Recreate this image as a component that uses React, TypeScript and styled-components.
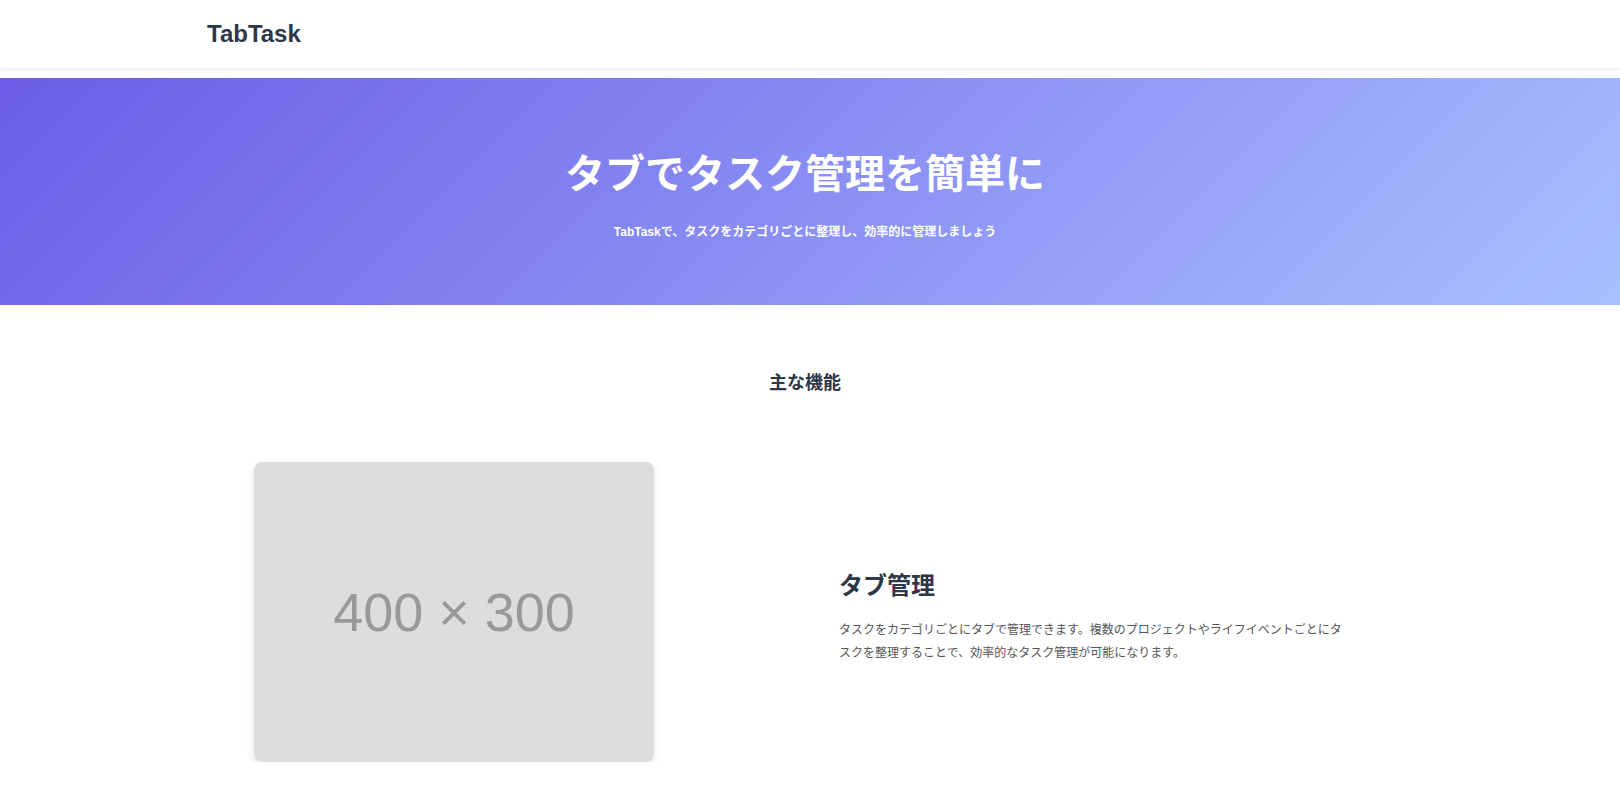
import React from "react";
import styled, { createGlobalStyle } from "styled-components";

const GlobalStyle = createGlobalStyle`
  * {
    box-sizing: border-box;
  }

  body {
    margin: 0;
    padding-right: 10px;
    background: #ffffff;
    font-family: "Liberation Sans", "Noto Sans CJK JP", sans-serif;
    color: #2d3748;
  }
`;

const Header = styled.header`
  height: 68px;
  margin-right: -10px;
  padding-right: 10px;
  background: #ffffff;
  box-shadow: 0 2px 4px rgba(0, 0, 0, 0.08);
  display: flex;
  align-items: center;
`;

const Container = styled.div`
  width: 1200px;
  margin: 0 auto;
`;

const Logo = styled.h1`
  margin: 0;
  padding-left: 2px;
  font-size: 24px;
  font-weight: 700;
  color: #2d3748;
  line-height: 1;
`;

const Hero = styled.section`
  margin-top: 10px;
  margin-right: -10px;
  padding-right: 10px;
  height: 227px;
  padding-top: 72px;
  background: linear-gradient(135deg, #6c5ce7 0%, #a8c0ff 100%);
  color: #ffffff;
  text-align: center;
`;

const HeroTitle = styled.h2`
  margin: 0;
  font-size: 40px;
  line-height: 48px;
  font-weight: 700;
`;

const HeroText = styled.p`
  margin: 25px 0 0;
  font-size: 12px;
  line-height: 18px;
  font-weight: 600;
`;

const Features = styled.section`
  padding-top: 65px;
`;

const SectionTitle = styled.h3`
  margin: 0;
  text-align: center;
  font-size: 18px;
  line-height: 27px;
  font-weight: 700;
  color: #2d3748;
`;

const FeatureRow = styled.div`
  margin-top: 65px;
  padding-left: 49px;
  display: grid;
  grid-template-columns: 400px 506px;
  column-gap: 185px;
  align-items: center;
`;

const Placeholder = styled.div<{ $w: number; $h: number }>`
  width: ${(p) => p.$w}px;
  height: ${(p) => p.$h}px;
  background: #dddddd;
  border-radius: 8px;
  box-shadow: 0 4px 8px rgba(0, 0, 0, 0.1);
  display: flex;
  align-items: center;
  justify-content: center;
  color: #999999;
  font-family: "Liberation Sans", sans-serif;
  font-size: 54px;
`;

const FeatureBody = styled.div`
  padding-top: 10px;
`;

const FeatureTitle = styled.h4`
  margin: 0;
  font-size: 24px;
  line-height: 31px;
  font-weight: 700;
  color: #2d3748;
`;

const FeatureText = styled.p`
  margin: 18px 0 0;
  font-size: 12px;
  line-height: 23px;
  color: #555555;
`;

export default function App() {
  return (
    <>
      <GlobalStyle />
      <Header>
        <Container>
          <Logo>TabTask</Logo>
        </Container>
      </Header>

      <Hero>
        <HeroTitle>タブでタスク管理を簡単に</HeroTitle>
        <HeroText>
          TabTaskで、タスクをカテゴリごとに整理し、効率的に管理しましょう
        </HeroText>
      </Hero>

      <Features>
        <Container>
          <SectionTitle>主な機能</SectionTitle>
          <FeatureRow>
            <Placeholder $w={400} $h={300}>
              400 × 300
            </Placeholder>
            <FeatureBody>
              <FeatureTitle>タブ管理</FeatureTitle>
              <FeatureText>
                タスクをカテゴリごとにタブで管理できます。複数のプロジェクトやライフイベントごとにタスクを整理することで、効率的なタスク管理が可能になります。
              </FeatureText>
            </FeatureBody>
          </FeatureRow>
        </Container>
      </Features>
    </>
  );
}
